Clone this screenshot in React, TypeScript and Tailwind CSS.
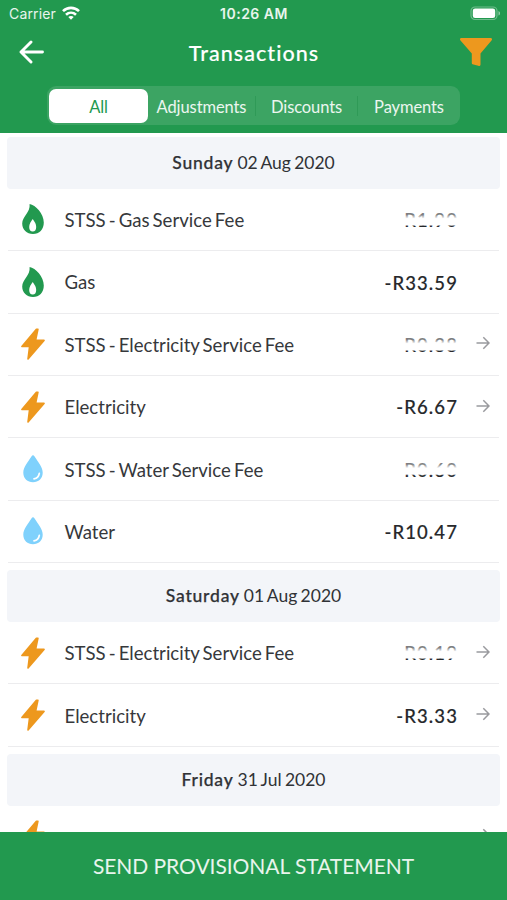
import { useState } from 'react'
import clsx from 'clsx'

type Kind = 'gas' | 'electricity' | 'water'

interface Transaction {
  kind: Kind
  label: string
  amount: string
  hidden?: boolean
  link?: boolean
}

interface Day {
  weekday: string
  date: string
  items: Transaction[]
}

const tabs = [
  { name: 'All', width: 'w-[99px]' },
  { name: 'Adjustments', width: 'w-[107px]' },
  { name: 'Discounts', width: 'w-[101px]' },
  { name: 'Payments', width: 'w-[102px]' },
]

const days: Day[] = [
  {
    weekday: 'Sunday',
    date: '02 Aug 2020',
    items: [
      { kind: 'gas', label: 'STSS - Gas Service Fee', amount: 'R1.90', hidden: true },
      { kind: 'gas', label: 'Gas', amount: '-R33.59' },
      { kind: 'electricity', label: 'STSS - Electricity Service Fee', amount: 'R0.38', hidden: true, link: true },
      { kind: 'electricity', label: 'Electricity', amount: '-R6.67', link: true },
      { kind: 'water', label: 'STSS - Water Service Fee', amount: 'R0.60', hidden: true },
      { kind: 'water', label: 'Water', amount: '-R10.47' },
    ],
  },
  {
    weekday: 'Saturday',
    date: '01 Aug 2020',
    items: [
      { kind: 'electricity', label: 'STSS - Electricity Service Fee', amount: 'R0.19', hidden: true, link: true },
      { kind: 'electricity', label: 'Electricity', amount: '-R3.33', link: true },
    ],
  },
  {
    weekday: 'Friday',
    date: '31 Jul 2020',
    items: [{ kind: 'electricity', label: '', amount: '', link: true }],
  },
]

function KindIcon({ kind }: { kind: Kind }) {
  if (kind === 'gas') {
    return (
      <svg viewBox="0 0 24 32" className="h-8 w-6">
        <path
          d="M8.6 1C14.5 2 22.8 10.5 22.8 19.5C22.8 26.5 18.3 31 12 31C5.7 31 1.2 26.8 1.2 20.5C1.2 13.5 9.5 9.5 8.6 1Z"
          fill="#22994f"
        />
        <path d="M11.7 16C13.5 18.5 15.2 21 15.2 24C15.2 27 13.8 28.5 11.7 28.5C9.6 28.5 8.2 27 8.2 24C8.2 21 9.9 18.5 11.7 16Z" fill="#fff" />
      </svg>
    )
  }
  if (kind === 'electricity') {
    return (
      <svg viewBox="0 0 24 32" className="h-8 w-6">
        <path
          d="M15.4 1.3L0.9 18.4H8.6L7 31L23 12.4H14.6L16.9 1.3Z"
          fill="#ed981e"
          stroke="#ed981e"
          strokeWidth="1.6"
          strokeLinejoin="round"
        />
      </svg>
    )
  }
  return (
    <svg viewBox="0 0 24 32" className="h-8 w-6">
      <path
        d="M12 2.2C12.6 2.2 13 2.7 13.4 3.3C17 9 21.7 14.2 21.7 19.7C21.7 25.4 17.5 29.2 12 29.2C6.5 29.2 2.3 25.4 2.3 19.7C2.3 14.2 7 9 10.6 3.3C11 2.7 11.4 2.2 12 2.2Z"
        fill="#7fd1fc"
      />
      <path d="M18.3 20.3C17.8 23.4 16 25.2 13 25.8" fill="none" stroke="#fff" strokeWidth="1.7" strokeLinecap="round" />
    </svg>
  )
}

function Row({ item }: { item: Transaction }) {
  return (
    <div className="mx-2 flex h-[62.4px] shrink-0 items-center border-b border-[#ececee] pl-[12.5px]">
      <KindIcon kind={item.kind} />
      <span className="ml-5 flex-1 pt-[3px] text-[18.6px] whitespace-nowrap text-[#36383b] [word-spacing:-1.7px]">{item.label}</span>
      <span className="relative pt-[3px] text-[18.5px] font-medium tracking-[1.1px] text-[#26282b] [-webkit-text-stroke:0.15px_#26282b]">
        {item.amount}
        {item.hidden && (
          <span className="absolute inset-x-0 top-0 h-full bg-[linear-gradient(rgba(255,255,255,0.4)_34%,white_47%,white_67%,transparent_72%)]" />
        )}
      </span>
      <span className="flex w-[41px] shrink-0 justify-center">
        {item.link && (
          <svg viewBox="0 0 14 14" className="-mt-0.5 ml-2 size-3.5" fill="none" stroke="#999a9e" strokeWidth="1.5">
            <path d="M0.5 7H12.5M7.3 1.3L13 7L7.3 12.7" />
          </svg>
        )}
      </span>
    </div>
  )
}

export default function App() {
  const [active, setActive] = useState('All')

  return (
    <div className="flex h-[900px] w-[507px] flex-col overflow-hidden bg-white font-['Lato',sans-serif]">
      <header className="flex h-[133px] shrink-0 flex-col bg-[#22994f] text-white">
        {/* status bar */}
        <div className="grid h-[27px] grid-cols-3 items-center pr-[6px] pl-[9px] font-['Inter',sans-serif] text-[14px] text-white/90">
          <div className="flex items-center gap-[6px]">
            <span className="tracking-[0.15px]">Carrier</span>
            <svg viewBox="0 0 18 14" className="-mt-0.5 h-3.5 w-[18px]" fill="none" stroke="#fff" strokeWidth="2.6">
              <path d="M1 5.2C5.5 0.7 12.5 0.7 17 5.2" />
              <path d="M4 8.8C6.9 6 11.1 6 14 8.8" />
              <path d="M9 13.8L6.3 11C7.8 9.6 10.2 9.6 11.7 11Z" fill="#fff" stroke="none" />
            </svg>
          </div>
          <span className="-ml-[2px] text-center font-semibold tracking-[0.5px] whitespace-nowrap">10:26 AM</span>
          <svg viewBox="0 0 31 15" className="h-[15px] w-[31px] justify-self-end">
            <rect x="1" y="1" width="26" height="12.5" rx="4" fill="none" stroke="#fff" strokeOpacity="0.35" strokeWidth="1.2" />
            <rect x="2.8" y="2.5" width="22.4" height="9.5" rx="2.3" fill="#fff" />
            <path d="M28.5 5V9.6C29.5 9.2 30 8.3 30 7.3S29.5 5.4 28.5 5Z" fill="#fff" fillOpacity="0.5" />
          </svg>
        </div>

        <div className="flex h-[59px] items-center justify-between pr-[15px] pb-[9px] pl-[19px]">
          <svg viewBox="0 0 26 24" className="h-6 w-[32px]" preserveAspectRatio="xMinYMid" fill="none" stroke="#fff" strokeWidth="2.9" strokeLinecap="round" strokeLinejoin="round">
            <path d="M23.5 12H2M12 2L2 12L12 22" />
          </svg>
          <h1 className="-ml-[3px] pt-0.5 text-[21.5px] font-medium tracking-[1.05px] [-webkit-text-stroke:0.15px_white]">Transactions</h1>
          <svg viewBox="0 0 32 28" className="h-7 w-8">
            <path d="M1.5 0H30.5C32 0 32.5 1.5 31.5 2.6L20.5 15.5V26.5C20.5 27.8 19.5 28.3 18.3 27.8L12.5 26.3C12 26 11.8 25.5 11.8 25V15.5L0.5 2.6C-0.5 1.5 0 0 1.5 0Z" fill="#ed981e" />
          </svg>
        </div>

        <div className="mx-auto flex h-[39px] w-[413px] items-center rounded-[9px] bg-[#3ca463] pl-[2px]">
          {tabs.map((tab, i) => (
            <div key={tab.name} className="flex items-center">
              {i > 1 && <span className="h-5 w-px bg-[#2f9a57]" />}
              <button
                onClick={() => setActive(tab.name)}
                className={clsx(
                  'h-[34px] rounded-[7px] pt-[3px] text-center text-[16.5px] tracking-[-0.1px]',
                  tab.width,
                  active === tab.name ? 'bg-white text-[#22994f]' : 'text-white/90',
                )}
              >
                {tab.name}
              </button>
            </div>
          ))}
        </div>
      </header>

      <main className="flex min-h-0 flex-1 flex-col overflow-hidden pt-[4px]">
        {days.map((day, i) => (
          <section key={day.date} className={clsx('flex shrink-0 flex-col', i > 0 && 'mt-[7px]')}>
            <h2 className="mx-[7px] flex h-[51.8px] items-center justify-center gap-1 rounded-[4px] bg-[#f3f5f9] pt-px text-[17.5px] text-[#303236]">
              <span className="font-medium tracking-[0.8px] [-webkit-text-stroke:0.25px_#303236]">{day.weekday}</span>
              <span className="[word-spacing:-1.2px]">{day.date}</span>
            </h2>
            {day.items.map((item) => (
              <Row key={item.label} item={item} />
            ))}
          </section>
        ))}
      </main>

      <footer className="flex h-[68px] shrink-0 items-center justify-center bg-[#22994f]">
        <button className="text-[21px] tracking-[-0.05px] text-white/90">SEND PROVISIONAL STATEMENT</button>
      </footer>
    </div>
  )
}
